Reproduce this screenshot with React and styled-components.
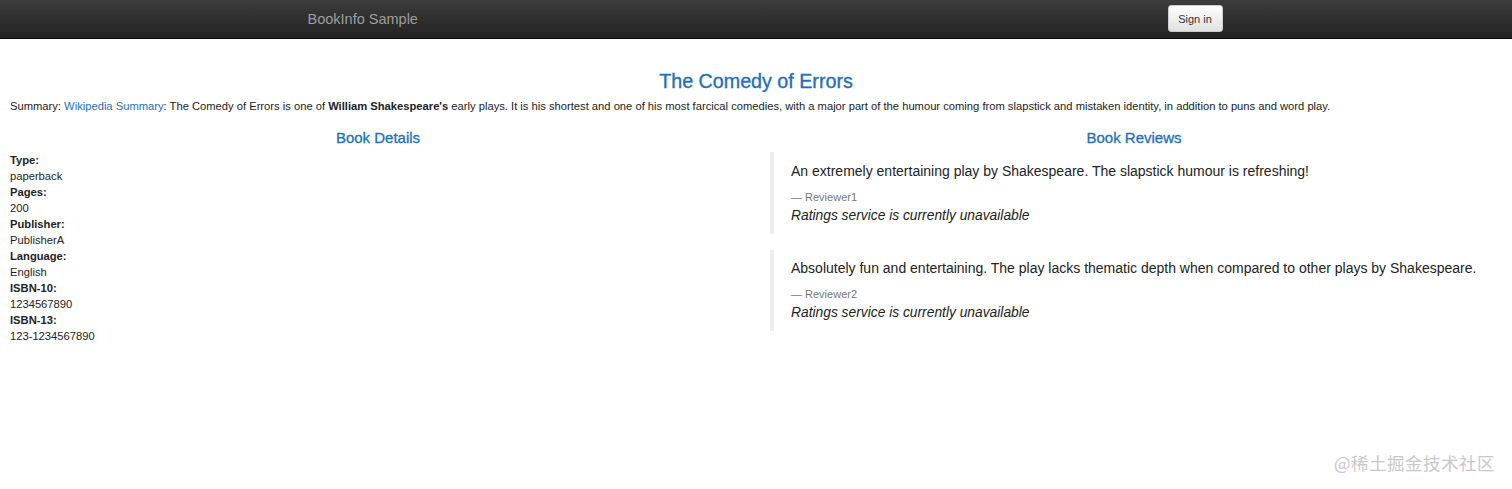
import React from "react";
import styled, { createGlobalStyle } from "styled-components";

const GlobalStyle = createGlobalStyle`
	body {
		margin: 0;
		background: #fff;
		font-family: "Liberation Sans", Arial, sans-serif;
		color: #333;
	}
`;

const Page = styled.div`
	position: relative;
	width: 1512px;
	height: 489px;
	overflow: hidden;
`;

const Navbar = styled.nav`
	height: 39px;
	background: linear-gradient(to bottom, #3c3c3c 0%, #222 100%);
	border-bottom: 1px solid #080808;
	box-sizing: border-box;
`;

const NavInner = styled.div`
	width: 933px;
	margin: 0 auto;
	height: 100%;
	display: flex;
	align-items: center;
	justify-content: space-between;
	padding: 0 0 0 18px;
	box-sizing: border-box;
`;

const Brand = styled.span`
	color: #9d9d9d;
	font-size: 14.5px;
`;

const SignIn = styled.button`
	font-family: "Liberation Sans", Arial, sans-serif;
	font-size: 11px;
	color: #333;
	height: 27px;
	width: 55px;
	padding: 0;
	margin-top: -1px;
	border: 1px solid #ccc;
	border-radius: 3px;
	background: linear-gradient(to bottom, #fff 0%, #e0e0e0 100%);
`;

const Content = styled.div`
	padding: 0 10px;
`;

const Title = styled.h3`
	margin: 31px 0 6px;
	text-align: center;
	font-size: 19.7px;
	line-height: 22px;
	font-weight: 500;
	color: #1f6fbd;
	-webkit-text-stroke: 0.35px #1f6fbd;
`;

const Summary = styled.p`
	margin: 0;
	font-size: 11.2px;
	line-height: 16px;
	color: #222;
`;

const Link = styled.a`
	color: #1f6fbd;
	text-decoration: none;
`;

const Row = styled.div`
	display: grid;
	grid-template-columns: 1fr 1fr;
	margin: 15px -10px 0;
`;

const Column = styled.div`
	padding: 0 10px;
`;

const SectionTitle = styled.h4`
	margin: 0 0 6px;
	text-align: center;
	font-size: 15px;
	line-height: 17px;
	font-weight: 500;
	color: #1f6fbd;
	-webkit-text-stroke: 0.3px #1f6fbd;
`;

const DetailList = styled.dl`
	margin: 0;
	font-size: 11.2px;
	line-height: 16px;
	color: #222;
`;

const Term = styled.dt`
	font-weight: bold;
`;

const Value = styled.dd`
	margin: 0;
`;

const Quote = styled.blockquote`
	margin: ${(props) => (props.first ? "0" : "0")} 0 16px 4px;
	padding: ${(props) => (props.first ? "10px" : "9px")} 15px 8px 17px;
	border-left: 4px solid #eee;
	font-size: 14px;
	line-height: 19px;
	color: #222;
`;

const QuoteText = styled.p`
	margin: 0 0 9px;
`;

const Footer = styled.footer`
	font-size: 11px;
	line-height: 15px;
	color: #777;
`;

const Rating = styled.div`
	font-size: 13.8px;
	font-style: italic;
	line-height: 21px;
`;

const Watermark = styled.div`
	position: absolute;
	right: 17px;
	top: 450px;
	font-size: 17.5px;
	color: #c8c8c8;
	font-family: "Noto Sans CJK SC", "Liberation Sans", sans-serif;
	letter-spacing: 0.5px;
`;

const details = [
	["Type:", "paperback"],
	["Pages:", "200"],
	["Publisher:", "PublisherA"],
	["Language:", "English"],
	["ISBN-10:", "1234567890"],
	["ISBN-13:", "123-1234567890"],
];

const reviews = [
	{
		text: "An extremely entertaining play by Shakespeare. The slapstick humour is refreshing!",
		reviewer: "Reviewer1",
	},
	{
		text: "Absolutely fun and entertaining. The play lacks thematic depth when compared to other plays by Shakespeare.",
		reviewer: "Reviewer2",
	},
];

const App = () => {
	return (
		<Page>
			<GlobalStyle />
			<Navbar>
				<NavInner>
					<Brand>BookInfo Sample</Brand>
					<SignIn>Sign in</SignIn>
				</NavInner>
			</Navbar>
			<Content>
				<Title>The Comedy of Errors</Title>
				<Summary>
					Summary: <Link href="#">Wikipedia Summary</Link>: The Comedy of Errors is one of{" "}
					<b>William Shakespeare's</b> early plays. It is his shortest and one of his most farcical
					comedies, with a major part of the humour coming from slapstick and mistaken identity, in
					addition to puns and word play.
				</Summary>
				<Row>
					<Column>
						<SectionTitle>Book Details</SectionTitle>
						<DetailList>
							{details.map(([term, value]) => (
								<React.Fragment key={term}>
									<Term>{term}</Term>
									<Value>{value}</Value>
								</React.Fragment>
							))}
						</DetailList>
					</Column>
					<Column>
						<SectionTitle>Book Reviews</SectionTitle>
						{reviews.map((review, i) => (
							<Quote key={review.reviewer} first={i === 0}>
								<QuoteText>{review.text}</QuoteText>
								<Footer>— {review.reviewer}</Footer>
								<Rating>Ratings service is currently unavailable</Rating>
							</Quote>
						))}
					</Column>
				</Row>
			</Content>
			<Watermark>@稀土掘金技术社区</Watermark>
		</Page>
	);
};

export default App;
